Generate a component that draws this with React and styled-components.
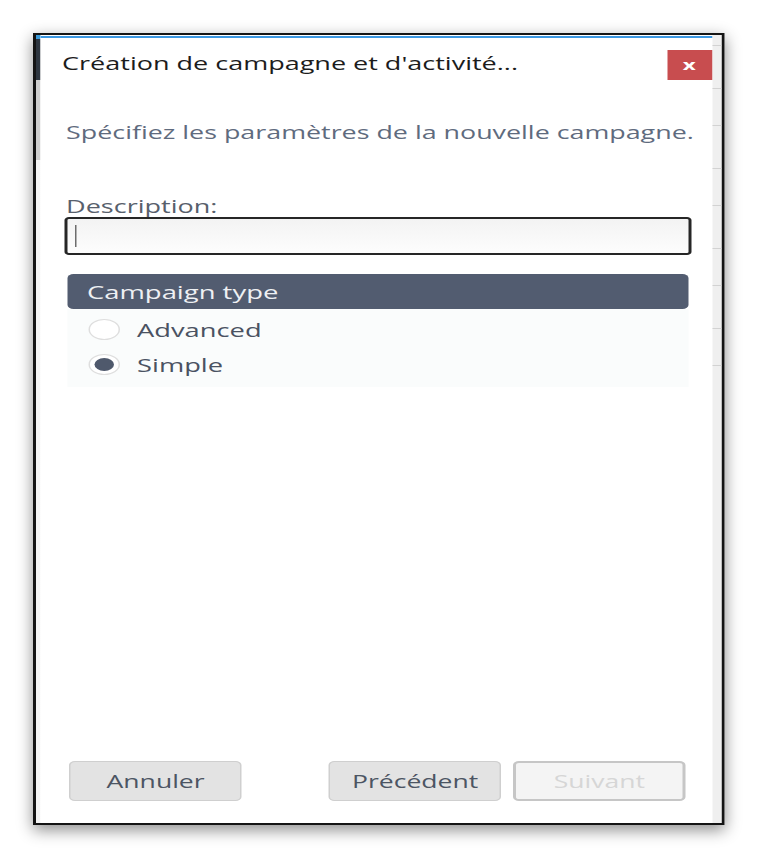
import React from 'react';
import styled, { createGlobalStyle } from 'styled-components';

// la capture d'origine est étirée horizontalement (~1.5x), on reproduit l'étirement
const STRETCH = 1.5;

const GlobalStyle = createGlobalStyle`
  html, body {
    margin: 0;
    background: #ffffff;
  }
  body {
    font-family: "Open Sans", "Noto Sans", sans-serif;
  }
`;

const Page = styled.div`
  padding: 33px 0 0 33px;
  height: 858px;
  box-sizing: border-box;
  overflow: hidden;
`;

const Stretch = styled.div`
  width: ${691 / STRETCH}px;
  transform: scaleX(${STRETCH});
  transform-origin: 0 0;
`;

const Frame = styled.div`
  height: 792px;
  box-sizing: border-box;
  border: 2px solid #141414;
  display: flex;
  background: #ffffff;
  box-shadow: 0 5px 12px rgba(0, 0, 0, 0.45);
`;

const LeftGutter = styled.div`
  flex: 0 0 2.7px;
  background: linear-gradient(
    to bottom,
    #3a9ad9 0 4px,
    #2e3640 4px 45px,
    #cfcfcf 45px 125px,
    #f4f4f4 125px
  );
`;

const RightGutter = styled.div`
  flex: 0 0 5.4px;
  background-color: #efefef;
  background-image: repeating-linear-gradient(
    to bottom,
    transparent 0 10px,
    #d2d2d2 10px 11px,
    transparent 11px 53px,
    #d2d2d2 53px 54px,
    transparent 54px 80px
  );
  background-size: 100% 340px;
  background-repeat: no-repeat;
`;

const Dialog = styled.div`
  flex: 1;
  min-width: 0;
  display: flex;
  flex-direction: column;
  margin: 1px 0 1px 0;
  border-top: 2px solid #3c98e2;
  background: #ffffff;
`;

const Header = styled.div`
  display: flex;
  justify-content: space-between;
  align-items: flex-start;
  padding: 12px 0.7px 0 14.7px;
`;

const Title = styled.div`
  font-size: 18px;
  line-height: 26px;
  color: #1c1c1c;
  white-space: nowrap;
`;

const CloseButton = styled.div`
  flex: 0 0 30px;
  height: 30px;
  display: grid;
  place-items: center;
  background: #c84d4f;
  color: #ffffff;
  font-weight: 700;
  font-size: 15px;
  line-height: 1;
  padding-bottom: 2px;
  box-sizing: border-box;
`;

const Body = styled.div`
  display: flex;
  flex-direction: column;
  padding: 0 14.7px 0 16.7px;
`;

const Subtitle = styled.div`
  margin-top: 39px;
  padding-left: 0.7px;
  font-size: 17.9px;
  line-height: 26px;
  color: #5f6b7e;
  white-space: nowrap;
`;

const FieldLabel = styled.div`
  margin-top: 50px;
  padding-left: 0.7px;
  font-size: 18px;
  line-height: 22px;
  color: #58606c;
`;

const TextBox = styled.div`
  height: 38px;
  box-sizing: border-box;
  border: 2px solid #262626;
  border-radius: 3px;
  background: linear-gradient(to bottom, #f3f3f3, #fdfdfd);
  display: flex;
  align-items: center;
  padding-left: 4.7px;
`;

const Caret = styled.span`
  width: 1px;
  height: 22px;
  background: #6d6d6d;
`;

const Group = styled.div`
  margin: 19px 1.3px 0 1.3px;
`;

const GroupHeader = styled.div`
  height: 35px;
  border-radius: 4px;
  background: #525c70;
  color: #eef0f3;
  font-size: 18.3px;
  line-height: 36px;
  padding-left: 13.3px;
`;

const GroupBody = styled.div`
  background: #fafcfc;
  padding: 3px 0 5px 14px;
`;

const RadioRow = styled.label`
  height: 35px;
  display: flex;
  align-items: center;
  gap: 11.7px;
  font-size: 18.2px;
  color: #4a5262;
`;

const RadioCircle = styled.span`
  width: 21px;
  height: 21px;
  box-sizing: border-box;
  border-radius: 50%;
  border: 1.5px solid #dedede;
  background: #ffffff;
  display: grid;
  place-items: center;

  &::after {
    content: '';
    width: 13px;
    height: 13px;
    border-radius: 50%;
    background: ${({ checked }) => (checked ? '#4f596c' : 'transparent')};
  }
`;

const Footer = styled.div`
  margin-top: auto;
  display: flex;
  align-items: center;
  padding: 0 18px 21px 19.3px;
`;

const Spacer = styled.div`
  flex: 1;
`;

const Button = styled.div`
  flex: 0 0 115.5px;
  height: 40px;
  box-sizing: border-box;
  border-radius: 4px;
  display: grid;
  place-items: center;
  font-size: 17.7px;
  margin-left: ${({ gap }) => gap || 0}px;
  background: ${({ disabled }) => (disabled ? '#f4f4f4' : '#e3e3e3')};
  border: ${({ disabled }) => (disabled ? '2px solid #c6c6c6' : '1px solid #cfcfcf')};
  color: ${({ disabled }) => (disabled ? '#d6d6d6' : '#4c5563')};
`;

export default function App() {
  return (
    <Page>
      <GlobalStyle />
      <Stretch>
        <Frame>
          <LeftGutter />
          <Dialog>
            <Header>
              <Title>Création de campagne et d'activité...</Title>
              <CloseButton>x</CloseButton>
            </Header>
            <Body>
              <Subtitle>Spécifiez les paramètres de la nouvelle campagne.</Subtitle>
              <FieldLabel>Description:</FieldLabel>
              <TextBox>
                <Caret />
              </TextBox>
              <Group>
                <GroupHeader>Campaign type</GroupHeader>
                <GroupBody>
                  <RadioRow>
                    <RadioCircle />
                    Advanced
                  </RadioRow>
                  <RadioRow>
                    <RadioCircle checked />
                    Simple
                  </RadioRow>
                </GroupBody>
              </Group>
            </Body>
            <Footer>
              <Button>Annuler</Button>
              <Spacer />
              <Button>Précédent</Button>
              <Button gap={7.3} disabled>Suivant</Button>
            </Footer>
          </Dialog>
          <RightGutter />
        </Frame>
      </Stretch>
    </Page>
  );
}
